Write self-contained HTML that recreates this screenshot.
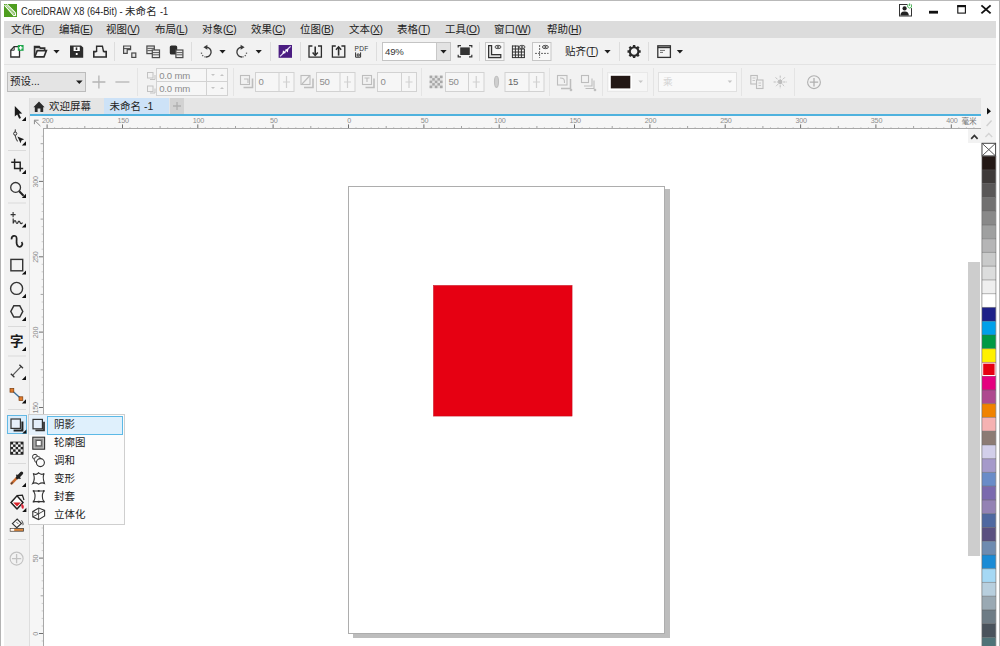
<!DOCTYPE html>
<html lang="zh-CN">
<head>
<meta charset="utf-8">
<title>CorelDRAW X8 (64-Bit) - 未命名 -1</title>
<style>
html,body{margin:0;padding:0;}
body{width:1000px;height:646px;overflow:hidden;position:relative;background:#fff;
 font-family:"Liberation Sans","Noto Sans CJK SC",sans-serif;font-size:12px;color:#1a1a1a;}
.abs{position:absolute;}
#win{position:absolute;left:0;top:0;width:1000px;height:646px;overflow:hidden;}
#topline{left:0;top:0;width:1000px;height:1px;background:#b9b9b9;}
#titlebar{left:0;top:1px;width:1000px;height:20px;background:#fff;}
#title{left:21px;top:3px;height:16px;width:160px;font-size:10.6px;line-height:16px;color:#262626;white-space:nowrap;}
#title span{position:absolute;top:0;transform-origin:0 50%;white-space:nowrap;}
#menubar{left:4px;top:21px;width:992px;height:17px;background:#dcdcdc;}
.mi{position:absolute;top:0px;height:17px;line-height:17px;font-size:10.5px;color:#222;white-space:nowrap;}
.mi span{font-size:10.2px;letter-spacing:-0.3px;}
.mi u{text-decoration:underline;}
#toolbar{left:4px;top:38px;width:992px;height:26px;background:#f2f2f2;}
#propbar{left:4px;top:64px;width:992px;height:34px;background:#f2f2f2;border-top:1px solid #e3e3e3;box-sizing:border-box;}
#leftedge{left:0;top:21px;width:4px;height:625px;background:#fff;}
#toolbox{left:4px;top:98px;width:26px;height:548px;background:#f2f2f2;border-right:1px solid #dedede;box-sizing:border-box;}
#tabrow{left:30px;top:98px;width:951px;height:16px;background:#e5e5e5;}
#blueline{left:30px;top:114px;width:951px;height:2px;background:#4fb2de;}
#hruler{left:30px;top:116px;width:951px;height:13px;background:#f6f6f6;overflow:hidden;}
#vruler{left:30px;top:129px;width:13px;height:517px;background:#f6f6f6;overflow:hidden;}
#canvas{left:43px;top:128px;width:940px;height:520px;background:#fff;border:1px solid #a8a8a8;box-sizing:border-box;}
.sep{position:absolute;width:1px;background:#d4d4d4;}
.rl{position:absolute;top:0px;font-size:8px;line-height:9px;color:#777;letter-spacing:-0.3px;}
.rt{position:absolute;bottom:0;width:1px;height:4px;background:#999;}
.vl{position:absolute;left:0px;font-size:8px;line-height:9px;color:#777;letter-spacing:-0.3px;transform-origin:0 0;transform:rotate(-90deg);white-space:nowrap;}
.vt{position:absolute;right:0;height:1px;width:4px;background:#999;}
.fld{position:absolute;box-sizing:border-box;border:1px solid #d9d9d9;background:#f7f7f7;color:#8a8a8a;font-size:11px;}
</style>
</head>
<body>
<div id="win">
<div class="abs" id="titlebar"></div>
<div class="abs" id="topline"></div>
<div class="abs" id="leftedge"></div>
<div class="abs" id="title"><span style="left:0;transform:scaleX(0.866)">CorelDRAW X8 (64-Bit) -</span><span style="left:104px;font-size:10.5px;letter-spacing:0.1px">未命名</span><span style="left:139px;transform:scaleX(0.86)">-1</span></div>
<svg class="abs" style="left:880px;top:0" width="120" height="21" viewBox="880 0 120 21">
<rect x="899.5" y="4.5" width="12" height="11.5" fill="#fff" stroke="#333" stroke-width="1"/>
<circle cx="904.6" cy="8.4" r="2.1" fill="#222"/>
<path d="M900.4,15.4 C900.6,12 902.4,11.4 904.6,11.4 C906.8,11.4 908.6,12 908.8,15.4 Z" fill="#222"/>
<circle cx="909.6" cy="6" r="2.6" fill="#fff"/>
<path d="M908.2,4.6 A2,2 0 1 0 911,4.6 M909.6,3.4 V6" fill="none" stroke="#3bb54a" stroke-width="0.9"/>
<rect x="929" y="10.8" width="9" height="2.8" fill="#111"/>
<rect x="957.8" y="6" width="7.6" height="7.1" fill="none" stroke="#111" stroke-width="1.1"/>
<rect x="957.2" y="5" width="8.8" height="2.2" fill="#111"/>
<path d="M981.4,5.4 L990.6,13.4 M990.6,5.4 L981.4,13.4" stroke="#111" stroke-width="1.9"/>
</svg>
<svg class="abs" style="left:4px;top:4px" width="13" height="13" viewBox="0 0 13 13">
<rect width="13" height="13" fill="#4f9e1f"/>
<path d="M0.5,1.2 L9.8,11.6 L11.6,11.2 L11.2,8.6 L3,0.4" fill="none" stroke="#fff" stroke-width="1.1"/>
<path d="M1.6,0.6 L10.6,10.4" stroke="#dff0d0" stroke-width="1"/>
</svg>
<div class="abs" style="left:0;top:0;width:1px;height:646px;background:#b4b4b4"></div>
<div class="abs" style="left:999px;top:0;width:1px;height:646px;background:#b4b4b4"></div>
<div class="abs" style="left:996px;top:21px;width:3px;height:625px;background:#fff"></div>
<div class="abs" id="menubar">
 <div class="mi" style="left:7px">文件<span>(<u>F</u>)</span></div>
 <div class="mi" style="left:55px">编辑<span>(<u>E</u>)</span></div>
 <div class="mi" style="left:102px">视图<span>(<u>V</u>)</span></div>
 <div class="mi" style="left:151px">布局<span>(<u>L</u>)</span></div>
 <div class="mi" style="left:198px">对象<span>(<u>C</u>)</span></div>
 <div class="mi" style="left:247px">效果<span>(<u>C</u>)</span></div>
 <div class="mi" style="left:296px">位图<span>(<u>B</u>)</span></div>
 <div class="mi" style="left:345px">文本<span>(<u>X</u>)</span></div>
 <div class="mi" style="left:393px">表格<span>(<u>T</u>)</span></div>
 <div class="mi" style="left:441px">工具<span>(<u>O</u>)</span></div>
 <div class="mi" style="left:490px">窗口<span>(<u>W</u>)</span></div>
 <div class="mi" style="left:543px">帮助<span>(<u>H</u>)</span></div>
</div>
<div class="abs" id="toolbar"></div>
<div class="abs" id="propbar"></div>
<svg class="abs" style="left:0;top:39px" width="1000" height="26" viewBox="0 39 1000 26">
<g fill="none" stroke="#2d2d2d" stroke-width="1.5" stroke-linejoin="miter">
 <!-- new -->
 <path d="M10.8,50.2 L14.2,46.6 H19.5 V57 H10.8 Z" fill="#fff" stroke-width="1.3"/>
 <path d="M10.8,50.2 H14.2 V46.6" stroke-width="1"/>
 <rect x="17.8" y="45" width="5.8" height="5.8" fill="#1ea64b" stroke="none"/>
 <path d="M20.7,46.1 V49.7 M18.9,47.9 H22.5" stroke="#fff" stroke-width="1.3"/>
 <!-- open -->
 <path d="M34.6,56.8 V46.6 H39.2 L40.4,48.2 H44.6 V50.4" stroke-width="1.7"/>
 <path d="M34.6,46.6 H39.2 L40.4,48.2 H34.6Z" fill="#2d2d2d" stroke="none"/>
 <path d="M34.8,56.9 L37.2,50.6 H46.4 L44,56.9 Z" stroke-width="1.6" fill="#f6f6f6"/>
 <!-- save -->
 <path d="M70,45.4 H81 L83.2,47.6 V57.8 H70 Z" fill="#2d2d2d" stroke="none"/>
 <rect x="73.6" y="46.8" width="6.2" height="4.2" fill="#fff" stroke="none"/>
 <rect x="75.7" y="47.4" width="1.6" height="2.6" fill="#2d2d2d" stroke="none"/>
 <rect x="75.8" y="53" width="1.8" height="2" fill="#fff" stroke="none"/>
 <!-- print -->
 <path d="M96.6,52 V46.2 H102.4 L103.6,52" stroke-width="1.4"/>
 <path d="M96.4,51.6 H93.8 V57 H106.2 V51.6 H103.6" stroke-width="1.6"/>
 <path d="M96.8,54.2 H103.2" stroke-width="0" />
</g>
<g fill="none" stroke="#4a4a4a" stroke-width="1.2">
 <!-- cut-ish -->
 <path d="M123.6,53.4 V46 H130.6 V49.6 H127.2 V53.4 Z" fill="#e6e6e6"/>
 <path d="M124,48.6 H130.4" stroke-width="1"/>
 <rect x="131.8" y="53" width="4" height="4.4" fill="#e6e6e6"/>
 <!-- copy -->
 <rect x="146.9" y="46" width="7.4" height="7.6" fill="#e6e6e6"/>
 <path d="M147.4,48.4 H154 M147.4,50.6 H152" stroke-width="0.9"/>
 <rect x="152.3" y="50" width="7.2" height="7.6" fill="#ececec"/>
 <path d="M152.8,52.6 H159 M152.8,54.8 H159" stroke-width="0.9"/>
 <!-- paste -->
 <rect x="170.4" y="46" width="6.2" height="8" rx="1" fill="#2d2d2d" stroke="#2d2d2d"/>
 <rect x="175.9" y="50" width="7" height="7.6" fill="#ececec"/>
 <path d="M176.4,52.6 H182.6 M176.4,54.8 H182.6" stroke-width="0.9"/>
</g>
<g fill="none" stroke="#3a3a3a" stroke-width="1.3">
 <!-- undo -->
 <path d="M206.4,47.2 A4.9,4.9 0 1 1 206.0,57" />
 <path d="M205.6,57 A4.9,4.9 0 0 1 201.4,52.6" stroke-dasharray="1.2 1.4" stroke="#555"/>
 <path d="M203.4,47.3 L207.4,44.8 V49.8 Z" fill="#3a3a3a" stroke="none"/>
 <!-- redo -->
 <path d="M241.6,47.2 A4.9,4.9 0 1 0 242.0,57" />
 <path d="M242.4,57 A4.9,4.9 0 0 0 246.6,52.6" stroke-dasharray="1.2 1.4" stroke="#555"/>
 <path d="M244.6,47.3 L240.6,44.8 V49.8 Z" fill="#3a3a3a" stroke="none"/>
</g>
<g fill="#1e1e1e">
 <path d="M53.4,50 H59.6 L56.5,53.4 Z"/>
 <path d="M219.4,50 H225.6 L222.5,53.4 Z"/>
 <path d="M255.6,50 H261.8 L258.7,53.4 Z"/>
 <path d="M440.4,50 H446.6 L443.5,53.4 Z"/>
 <path d="M604.4,50 H610.6 L607.5,53.4 Z"/>
 <path d="M676.8,50 H683 L679.9,53.4 Z"/>
</g>
<!-- purple -->
<rect x="278.6" y="45" width="13.4" height="12.8" fill="#4b1d82"/>
<path d="M280,56.4 L290.6,46.4" stroke="#e9defa" stroke-width="1.3"/>
<path d="M283,50.2 L286,53 L282.4,53.8Z M287.8,52.6 L284.8,49.8 L288.4,49Z" fill="#fff"/>
<g fill="none" stroke="#2d2d2d" stroke-width="1.3">
 <!-- import -->
 <path d="M312.4,46 H309 V57.2 H321.4 V46 H318"/>
 <path d="M315.2,46.6 V54.6" stroke-width="1.6"/>
 <path d="M312.6,52.4 L315.2,55.4 L317.8,52.4" stroke-width="1.5"/>
 <!-- export -->
 <path d="M335.8,46 H332.4 V57.2 H344.8 V46 H341.4"/>
 <path d="M338.6,47.6 V55.6" stroke-width="1.6"/>
 <path d="M336,49.8 L338.6,46.8 L341.2,49.8" stroke-width="1.5"/>
 <!-- pdf small icon -->
 <path d="M355.6,52.4 V57.2 H360.6 V52.4" stroke-width="1"/>
 <path d="M357.2,54 H359.2 V56 H357.2Z" stroke-width="0.9"/>
</g>
<text x="354.6" y="50.8" font-family="Liberation Sans, sans-serif" font-size="6.6" fill="#333" letter-spacing="0.2">PDF</text>
<!-- zoom box -->
<rect x="382.5" y="42.5" width="68" height="18" fill="#fff" stroke="#c4c4c4"/>
<rect x="437" y="43" width="13" height="17" fill="#e3e3e3"/>
<path d="M436.5,43 V60" stroke="#c8c8c8"/>
<path d="M440.4,50 H446.6 L443.5,53.4 Z" fill="#1e1e1e"/>
<text x="385" y="55" font-family="Liberation Sans, sans-serif" font-size="9.6" fill="#333" letter-spacing="-0.2">49%</text>
<!-- fit -->
<rect x="460.2" y="47.4" width="9.6" height="7.6" fill="#333"/>
<path d="M458.2,47.6 V45.6 H461 M469,45.6 H471.8 V47.6 M471.8,54.8 V56.8 H469 M461,56.8 H458.2 V54.8" fill="none" stroke="#333" stroke-width="1.2"/>
<!-- boxed ruler icon -->
<rect x="485.5" y="42.5" width="18.5" height="18" fill="#f8f8f8" stroke="#c6c6c6"/>
<path d="M488.6,45.6 H491.6 V54.6 H500.8 V57.6 H488.6 Z" fill="#ddd" stroke="#333" stroke-width="1.2"/>
<ellipse cx="498" cy="47" rx="3" ry="1.7" fill="#ddd" stroke="#444" stroke-width="0.9"/>
<ellipse cx="498" cy="47" rx="0.9" ry="1.1" fill="#444"/>
<!-- grid icon -->
<g stroke="#333" stroke-width="1">
<path d="M512,46 H518 M512,49 H524.6 M512,52 H524.6 M512,55 H524.6 M512,57.6 H524.6"/>
<path d="M512.4,45.6 V58 M515.4,45.6 V58 M518.4,45.6 V58 M521.4,49 V58 M524.4,49 V58"/>
</g>
<ellipse cx="522" cy="47" rx="3" ry="1.7" fill="#ddd" stroke="#444" stroke-width="0.9"/>
<ellipse cx="522" cy="47" rx="0.9" ry="1.1" fill="#444"/>
<!-- boxed guide icon -->
<rect x="532.5" y="42.5" width="18.5" height="18" fill="#f8f8f8" stroke="#c6c6c6"/>
<path d="M539.6,45 V58" stroke="#666" stroke-width="1" stroke-dasharray="2 1"/>
<path d="M535,53.4 H548.6" stroke="#666" stroke-width="1" stroke-dasharray="2 1"/>
<ellipse cx="545.4" cy="47" rx="3" ry="1.7" fill="#ddd" stroke="#444" stroke-width="0.9"/>
<ellipse cx="545.4" cy="47" rx="0.9" ry="1.1" fill="#444"/>
<!-- gear -->
<g transform="translate(634.1,51.5)">
<circle r="4.3" fill="none" stroke="#2a2a2a" stroke-width="2.1"/>
<g stroke="#2a2a2a" stroke-width="2.4">
<path d="M0,-6.6 V-4.6 M0,6.6 V4.6 M-6.6,0 H-4.6 M6.6,0 H4.6"/>
<path d="M-4.7,-4.7 L-3.3,-3.3 M4.7,4.7 L3.3,3.3 M-4.7,4.7 L-3.3,3.3 M4.7,-4.7 L3.3,-3.3"/>
</g>
</g>
<!-- window icon -->
<rect x="657.8" y="45.8" width="12.6" height="11.6" fill="#f4f4f4" stroke="#333" stroke-width="1.3"/>
<path d="M657.8,47.4 H670.4" stroke="#333" stroke-width="1.6"/>
<path d="M660,50.4 H665 M660,52.4 H663" stroke="#707070" stroke-width="1"/>
<!-- separators -->
<g stroke="#dddddd" stroke-width="1">
<path d="M114.5,42 V61 M191.5,42 V61 M270.5,42 V61 M300.5,42 V61 M376.5,42 V61 M479.5,42 V61 M619.5,42 V61 M648.5,42 V61"/>
</g>
</svg>
<div class="abs" style="left:565px;top:44px;font-size:10.5px;line-height:14px;color:#222;white-space:nowrap;">贴齐<span style="font-size:10.2px;letter-spacing:-0.3px">(<u>T</u>)</span></div>

<svg class="abs" style="left:0;top:65px" width="1000" height="33" viewBox="0 65 1000 33">
<!-- preset -->
<rect x="7.5" y="72.5" width="78" height="19" fill="#e4e4e4" stroke="#bcbcbc"/>
<path d="M76,80.4 H82.6 L79.3,84 Z" fill="#1e1e1e"/>
<path d="M92.4,82 H105.4 M98.9,75.6 V88.4" stroke="#b4b4b4" stroke-width="1.3"/>
<path d="M115.4,82 H129.4" stroke="#b4b4b4" stroke-width="1.3"/>
<g stroke="#e4e4e4"><path d="M137.5,68 V96 M233.5,68 V96 M421.5,68 V96 M549.5,68 V96 M602.5,68 V96 M653.5,68 V96 M741.5,68 V96 M794.5,68 V96"/></g>
<!-- xy fields -->
<rect x="156.5" y="68.5" width="71" height="27" fill="#f6f6f6" stroke="#d2d2d2"/>
<path d="M156.5,81.5 H227.5 M206.5,69 V95" stroke="#d2d2d2"/>
<text x="159.2" y="79.2" font-family="Liberation Sans, sans-serif" font-size="9.6" fill="#8c8c8c" letter-spacing="-0.2">0.0 mm</text>
<text x="159.2" y="92.2" font-family="Liberation Sans, sans-serif" font-size="9.6" fill="#8c8c8c" letter-spacing="-0.2">0.0 mm</text>
<g fill="#c4c4c4"><path d="M211,74 H215 L213,76Z M220,76 H224 L222,74Z M211,87 H215 L213,89Z M220,89 H224 L222,87Z"/></g>
<g fill="none" stroke="#c2c2c2" stroke-width="1"><rect x="147.5" y="72.5" width="5.5" height="5.5"/><path d="M150,79.5 H155 V75"/><rect x="147.5" y="86" width="5.5" height="5.5"/><path d="M150,93 H155 V88.5"/></g>
<rect x="255.5" y="72.5" width="38.5" height="19" fill="#f6f6f6" stroke="#d2d2d2"/><path d="M279.0,73 V91" stroke="#d2d2d2"/><path d="M283.0,82 H290.0 M286.5,76 V88" stroke="#d0d0d0" stroke-width="1.2"/><text x="258.5" y="85.1" font-family="Liberation Sans, sans-serif" font-size="9.6" fill="#8c8c8c" letter-spacing="-0.3">0</text><rect x="316.5" y="72.5" width="38.5" height="19" fill="#f6f6f6" stroke="#d2d2d2"/><path d="M340.0,73 V91" stroke="#d2d2d2"/><path d="M344.0,82 H351.0 M347.5,76 V88" stroke="#d0d0d0" stroke-width="1.2"/><text x="319.5" y="85.1" font-family="Liberation Sans, sans-serif" font-size="9.6" fill="#8c8c8c" letter-spacing="-0.3">50</text><rect x="377.5" y="72.5" width="39" height="19" fill="#f6f6f6" stroke="#d2d2d2"/><path d="M401.5,73 V91" stroke="#d2d2d2"/><path d="M405.5,82 H412.5 M409.0,76 V88" stroke="#d0d0d0" stroke-width="1.2"/><text x="380.5" y="85.1" font-family="Liberation Sans, sans-serif" font-size="9.6" fill="#8c8c8c" letter-spacing="-0.3">0</text><rect x="445.5" y="72.5" width="38.5" height="19" fill="#f6f6f6" stroke="#d2d2d2"/><path d="M468.5,73 V91" stroke="#d2d2d2"/><path d="M472.75,82 H479.75 M476.25,76 V88" stroke="#d0d0d0" stroke-width="1.2"/><text x="448.5" y="85.1" font-family="Liberation Sans, sans-serif" font-size="9.6" fill="#8c8c8c" letter-spacing="-0.3">50</text><rect x="505.0" y="72.5" width="39" height="19" fill="#f6f6f6" stroke="#d2d2d2"/><path d="M529.0,73 V91" stroke="#d2d2d2"/><path d="M533.0,82 H540.0 M536.5,76 V88" stroke="#d0d0d0" stroke-width="1.2"/><text x="508.0" y="85.1" font-family="Liberation Sans, sans-serif" font-size="9.6" fill="#8c8c8c" letter-spacing="-0.3" style="fill:#666">15</text>
<g fill="none" stroke="#bdbdbd" stroke-width="1.1">
<!-- icon1 -->
<rect x="240.5" y="75.5" width="9" height="9"/><path d="M243.5,87.5 H252.5 V78.5" stroke-width="1.6"/><path d="M244,79 H248 V83"/>
<!-- icon2 -->
<rect x="301" y="75.5" width="9" height="9"/><path d="M304,87.5 H313 V78.5" stroke-width="1.6"/><path d="M302,84 L309.5,76"/>
<!-- icon3 -->
<rect x="362.5" y="75.5" width="9" height="9"/><path d="M365.5,87.5 H374 V78.5" stroke-width="1.6"/><path d="M364.5,78 H369.5 M367,78 V82"/>
<!-- feather -->
<ellipse cx="496.5" cy="81.8" rx="2" ry="5.6" fill="#cfcfcf"/>
<!-- iconA -->
<rect x="557.5" y="75.5" width="9.5" height="9.5"/><path d="M561,88.5 H570.5 V79" stroke-width="1.5"/><path d="M560,78 C564,78 564.5,79 564.5,83"/><circle cx="571" cy="90" r="0.8"/>
<!-- iconB -->
<rect x="581.5" y="75.5" width="7" height="7"/><path d="M584,86 H592 V78.5 M585.5,88.5 H594 V80.5" /><circle cx="595" cy="90" r="0.8"/>
<!-- iconC -->
<rect x="750.8" y="75.5" width="6.5" height="8.5"/><rect x="756.5" y="80" width="6.5" height="8.5" fill="#f0f0f0"/>
<path d="M752.5,78 H755.5 M752.5,80.5 H755 M758.5,83 H761 M758.5,85.5 H761" stroke-width="0.8"/>
<!-- iconD -->
<path d="M780.2,75.6 V88.6 M773.6,82 H787 M775.6,77.4 L784.8,86.6 M784.8,77.4 L775.6,86.6" stroke-width="1" stroke-dasharray="2.2 1"/>
<circle cx="780.2" cy="82" r="1.6" fill="#bdbdbd"/>
</g>
<!-- checker -->
<g><rect x="429.6" y="75.6" width="13" height="12.6" fill="#e2e2e2"/>
<g fill="#a8a8a8">
<rect x="429.6" y="75.6" width="2.6" height="2.5"/><rect x="434.8" y="75.6" width="2.6" height="2.5"/><rect x="440" y="75.6" width="2.6" height="2.5"/>
<rect x="432.2" y="78.1" width="2.6" height="2.5"/><rect x="437.4" y="78.1" width="2.6" height="2.5"/>
<rect x="429.6" y="80.6" width="2.6" height="2.5"/><rect x="434.8" y="80.6" width="2.6" height="2.5"/><rect x="440" y="80.6" width="2.6" height="2.5"/>
<rect x="432.2" y="83.1" width="2.6" height="2.5"/><rect x="437.4" y="83.1" width="2.6" height="2.5"/>
<rect x="429.6" y="85.6" width="2.6" height="2.6"/><rect x="434.8" y="85.6" width="2.6" height="2.6"/><rect x="440" y="85.6" width="2.6" height="2.6"/>
</g></g>
<!-- color box -->
<rect x="607.5" y="72.5" width="40" height="19" fill="#f6f6f6" stroke="#dcdcdc" stroke-dasharray="1 1"/>
<rect x="609" y="74" width="23" height="16" fill="#fff"/>
<rect x="610.8" y="75.8" width="19.5" height="12.6" fill="#231815"/>
<path d="M638.4,80.4 H643 L640.7,83 Z" fill="#c6c6c6"/>
<!-- dropdown -->
<rect x="658.5" y="72.5" width="78" height="19" fill="#f9f9f9" stroke="#e0e0e0"/>
<path d="M727.6,80.4 H732.2 L729.9,83 Z" fill="#c6c6c6"/>
<!-- circle plus -->
<circle cx="814" cy="82.2" r="6.4" fill="none" stroke="#b0b0b0" stroke-width="1.1"/>
<path d="M809.8,82.2 H818.2 M814,78 V86.4" stroke="#b0b0b0" stroke-width="1.3"/>
</svg>
<div class="abs" style="left:10px;top:74px;font-size:10.5px;line-height:15px;color:#222;white-space:nowrap;">预设...</div>
<div class="abs" style="left:663px;top:75px;font-size:9.5px;line-height:14px;color:#d4d4d4;white-space:nowrap;">乘</div>
<div class="abs" id="tabrow"></div>
<div class="abs" style="left:104px;top:98px;width:65px;height:16px;background:#cde2f7"></div>
<div class="abs" style="left:170px;top:98px;width:14px;height:16px;background:#d2d2d2"></div>
<svg class="abs" style="left:30px;top:98px" width="160" height="16" viewBox="30 98 160 16">
<path d="M33.4,107.2 L39,101.6 L44.6,107.2 H43.2 V112 H40.4 V108.6 H37.6 V112 H34.8 V107.2 Z" fill="#2a2a2a"/>
<path d="M173,106 H181 M177,102 V110" stroke="#b0b0b0" stroke-width="1.3"/>
</svg>
<div class="abs" style="left:49px;top:99px;font-size:10.5px;line-height:14px;color:#222;white-space:nowrap;">欢迎屏幕</div>
<div class="abs" style="left:109.5px;top:99px;font-size:10.5px;line-height:14px;color:#222;white-space:nowrap;">未命名 -1</div>
<div class="abs" id="blueline"></div>
<div class="abs" id="hruler"></div>
<svg class="abs" style="left:30px;top:116px" width="951" height="13" viewBox="30 116 951 13">
<path d="M54.6,127 V128.5 M62.2,127 V128.5 M69.7,127 V128.5 M77.2,127 V128.5 M92.3,127 V128.5 M99.8,127 V128.5 M107.4,127 V128.5 M114.9,127 V128.5 M130.0,127 V128.5 M137.5,127 V128.5 M145.1,127 V128.5 M152.6,127 V128.5 M167.7,127 V128.5 M175.2,127 V128.5 M182.7,127 V128.5 M190.3,127 V128.5 M205.3,127 V128.5 M212.9,127 V128.5 M220.4,127 V128.5 M227.9,127 V128.5 M243.0,127 V128.5 M250.5,127 V128.5 M258.1,127 V128.5 M265.6,127 V128.5 M280.7,127 V128.5 M288.2,127 V128.5 M295.8,127 V128.5 M303.3,127 V128.5 M318.4,127 V128.5 M325.9,127 V128.5 M333.4,127 V128.5 M341.0,127 V128.5 M356.0,127 V128.5 M363.6,127 V128.5 M371.1,127 V128.5 M378.6,127 V128.5 M393.7,127 V128.5 M401.2,127 V128.5 M408.8,127 V128.5 M416.3,127 V128.5 M431.4,127 V128.5 M438.9,127 V128.5 M446.5,127 V128.5 M454.0,127 V128.5 M469.1,127 V128.5 M476.6,127 V128.5 M484.1,127 V128.5 M491.7,127 V128.5 M506.7,127 V128.5 M514.3,127 V128.5 M521.8,127 V128.5 M529.3,127 V128.5 M544.4,127 V128.5 M551.9,127 V128.5 M559.5,127 V128.5 M567.0,127 V128.5 M582.1,127 V128.5 M589.6,127 V128.5 M597.2,127 V128.5 M604.7,127 V128.5 M619.8,127 V128.5 M627.3,127 V128.5 M634.8,127 V128.5 M642.4,127 V128.5 M657.4,127 V128.5 M665.0,127 V128.5 M672.5,127 V128.5 M680.0,127 V128.5 M695.1,127 V128.5 M702.6,127 V128.5 M710.2,127 V128.5 M717.7,127 V128.5 M732.8,127 V128.5 M740.3,127 V128.5 M747.9,127 V128.5 M755.4,127 V128.5 M770.5,127 V128.5 M778.0,127 V128.5 M785.5,127 V128.5 M793.1,127 V128.5 M808.1,127 V128.5 M815.7,127 V128.5 M823.2,127 V128.5 M830.7,127 V128.5 M845.8,127 V128.5 M853.3,127 V128.5 M860.9,127 V128.5 M868.4,127 V128.5 M883.5,127 V128.5 M891.0,127 V128.5 M898.6,127 V128.5 M906.1,127 V128.5 M921.2,127 V128.5 M928.7,127 V128.5 M936.2,127 V128.5 M943.8,127 V128.5 M958.8,127 V128.5 M966.4,127 V128.5 M973.9,127 V128.5" stroke="#cdcdcd" stroke-width="1"/>
<path d="M84.8,126 V128.5 M160.1,126 V128.5 M235.5,126 V128.5 M310.8,126 V128.5 M386.2,126 V128.5 M461.5,126 V128.5 M536.9,126 V128.5 M612.2,126 V128.5 M687.6,126 V128.5 M762.9,126 V128.5 M838.3,126 V128.5 M913.6,126 V128.5" stroke="#a4a4a4" stroke-width="1"/>
<path d="M47.1,124.4 V128.5 M122.5,124.4 V128.5 M197.8,124.4 V128.5 M273.1,124.4 V128.5 M348.5,124.4 V128.5 M423.9,124.4 V128.5 M499.2,124.4 V128.5 M574.5,124.4 V128.5 M649.9,124.4 V128.5 M725.2,124.4 V128.5 M800.6,124.4 V128.5 M875.9,124.4 V128.5 M951.3,124.4 V128.5" stroke="#707070" stroke-width="1"/>
<text x="47.7" y="123.4" text-anchor="middle" font-family="Liberation Sans, sans-serif" font-size="7.2" fill="#8c8c8c" letter-spacing="-0.2">200</text>
<text x="123.1" y="123.4" text-anchor="middle" font-family="Liberation Sans, sans-serif" font-size="7.2" fill="#8c8c8c" letter-spacing="-0.2">150</text>
<text x="198.4" y="123.4" text-anchor="middle" font-family="Liberation Sans, sans-serif" font-size="7.2" fill="#8c8c8c" letter-spacing="-0.2">100</text>
<text x="273.8" y="123.4" text-anchor="middle" font-family="Liberation Sans, sans-serif" font-size="7.2" fill="#8c8c8c" letter-spacing="-0.2">50</text>
<text x="349.1" y="123.4" text-anchor="middle" font-family="Liberation Sans, sans-serif" font-size="7.2" fill="#8c8c8c" letter-spacing="-0.2">0</text>
<text x="424.5" y="123.4" text-anchor="middle" font-family="Liberation Sans, sans-serif" font-size="7.2" fill="#8c8c8c" letter-spacing="-0.2">50</text>
<text x="499.8" y="123.4" text-anchor="middle" font-family="Liberation Sans, sans-serif" font-size="7.2" fill="#8c8c8c" letter-spacing="-0.2">100</text>
<text x="575.1" y="123.4" text-anchor="middle" font-family="Liberation Sans, sans-serif" font-size="7.2" fill="#8c8c8c" letter-spacing="-0.2">150</text>
<text x="650.5" y="123.4" text-anchor="middle" font-family="Liberation Sans, sans-serif" font-size="7.2" fill="#8c8c8c" letter-spacing="-0.2">200</text>
<text x="725.9" y="123.4" text-anchor="middle" font-family="Liberation Sans, sans-serif" font-size="7.2" fill="#8c8c8c" letter-spacing="-0.2">250</text>
<text x="801.2" y="123.4" text-anchor="middle" font-family="Liberation Sans, sans-serif" font-size="7.2" fill="#8c8c8c" letter-spacing="-0.2">300</text>
<text x="876.5" y="123.4" text-anchor="middle" font-family="Liberation Sans, sans-serif" font-size="7.2" fill="#8c8c8c" letter-spacing="-0.2">350</text>
<text x="951.9" y="123.4" text-anchor="middle" font-family="Liberation Sans, sans-serif" font-size="7.2" fill="#8c8c8c" letter-spacing="-0.2">400</text>
<text x="961.5" y="124" font-family="Liberation Sans, Noto Sans CJK SC, sans-serif" font-size="7.6" fill="#707070">毫米</text>
<path d="M34.6,120.4 L40.4,126 M34.4,120.2 H38.6 M34.4,120.2 V124.2" stroke="#8a8a8a" stroke-width="1" fill="none"/>
</svg>
<div class="abs" id="canvas"></div>
<div class="abs" id="vruler"></div>
<svg class="abs" style="left:30px;top:129px" width="14" height="517" viewBox="30 129 14 517">
<path d="M41.6,641.0 H43 M41.6,626.0 H43 M41.6,618.4 H43 M41.6,610.9 H43 M41.6,603.4 H43 M41.6,588.3 H43 M41.6,580.8 H43 M41.6,573.2 H43 M41.6,565.7 H43 M41.6,550.6 H43 M41.6,543.1 H43 M41.6,535.5 H43 M41.6,528.0 H43 M41.6,512.9 H43 M41.6,505.4 H43 M41.6,497.9 H43 M41.6,490.3 H43 M41.6,475.3 H43 M41.6,467.7 H43 M41.6,460.2 H43 M41.6,452.7 H43 M41.6,437.6 H43 M41.6,430.1 H43 M41.6,422.5 H43 M41.6,415.0 H43 M41.6,399.9 H43 M41.6,392.4 H43 M41.6,384.8 H43 M41.6,377.3 H43 M41.6,362.2 H43 M41.6,354.7 H43 M41.6,347.2 H43 M41.6,339.6 H43 M41.6,324.6 H43 M41.6,317.0 H43 M41.6,309.5 H43 M41.6,302.0 H43 M41.6,286.9 H43 M41.6,279.4 H43 M41.6,271.8 H43 M41.6,264.3 H43 M41.6,249.2 H43 M41.6,241.7 H43 M41.6,234.1 H43 M41.6,226.6 H43 M41.6,211.5 H43 M41.6,204.0 H43 M41.6,196.5 H43 M41.6,188.9 H43 M41.6,173.9 H43 M41.6,166.3 H43 M41.6,158.8 H43 M41.6,151.3 H43 M41.6,136.2 H43" stroke="#cdcdcd" stroke-width="1"/>
<path d="M40.6,595.8 H43 M40.6,520.5 H43 M40.6,445.1 H43 M40.6,369.8 H43 M40.6,294.4 H43 M40.6,219.1 H43 M40.6,143.7 H43" stroke="#a4a4a4" stroke-width="1"/>
<path d="M39,633.5 H43 M39,558.1 H43 M39,482.8 H43 M39,407.5 H43 M39,332.1 H43 M39,256.8 H43 M39,181.4 H43" stroke="#707070" stroke-width="1"/>
<text transform="translate(38.4,633.9) rotate(-90)" text-anchor="middle" font-family="Liberation Sans, sans-serif" font-size="7.2" fill="#8c8c8c" letter-spacing="-0.2">0</text>
<text transform="translate(38.4,558.5) rotate(-90)" text-anchor="middle" font-family="Liberation Sans, sans-serif" font-size="7.2" fill="#8c8c8c" letter-spacing="-0.2">50</text>
<text transform="translate(38.4,483.2) rotate(-90)" text-anchor="middle" font-family="Liberation Sans, sans-serif" font-size="7.2" fill="#8c8c8c" letter-spacing="-0.2">100</text>
<text transform="translate(38.4,407.9) rotate(-90)" text-anchor="middle" font-family="Liberation Sans, sans-serif" font-size="7.2" fill="#8c8c8c" letter-spacing="-0.2">150</text>
<text transform="translate(38.4,332.5) rotate(-90)" text-anchor="middle" font-family="Liberation Sans, sans-serif" font-size="7.2" fill="#8c8c8c" letter-spacing="-0.2">200</text>
<text transform="translate(38.4,257.1) rotate(-90)" text-anchor="middle" font-family="Liberation Sans, sans-serif" font-size="7.2" fill="#8c8c8c" letter-spacing="-0.2">250</text>
<text transform="translate(38.4,181.8) rotate(-90)" text-anchor="middle" font-family="Liberation Sans, sans-serif" font-size="7.2" fill="#8c8c8c" letter-spacing="-0.2">300</text>
</svg>
<div class="abs" id="toolbox"></div>
<div class="abs" style="left:981px;top:98px;width:15px;height:548px;background:#f2f2f2"></div>
<div class="abs" style="left:968px;top:129px;width:13px;height:517px;background:#fff"></div>
<div class="abs" style="left:968px;top:129px;width:13px;height:14px;background:#f2f2f2"></div>
<div class="abs" style="left:968px;top:262px;width:12px;height:294px;background:#cdcdcd"></div>
<svg class="abs" style="left:960px;top:98px" width="40" height="548" viewBox="960 98 40 548">
<path d="M987,107.8 L991,111.2 L987,114.6 Z" fill="#111"/>
<path d="M986.6,126 L991.6,120.6" stroke="#d0d0d0" stroke-width="1.4"/>
<path d="M985.4,137 L988.8,133.4 L992.2,137" stroke="#d4d4d4" stroke-width="1.4" fill="none"/>
<path d="M971.2,138.8 L974.4,135.4 L977.6,138.8" stroke="#333" stroke-width="1.7" fill="none"/>
<rect x="982" y="143.3" width="13.6" height="12.6" fill="#fff" stroke="#444" stroke-width="1"/>
<path d="M982.4,143.6 L995.2,155.6 M995.2,143.6 L982.4,155.6" stroke="#444" stroke-width="0.9"/>
<rect x="982" y="156.20" width="13.8" height="13.75" fill="#231815"/>
<rect x="982" y="169.95" width="13.8" height="13.75" fill="#3e3a39"/>
<rect x="982" y="183.70" width="13.8" height="13.75" fill="#595757"/>
<rect x="982" y="197.45" width="13.8" height="13.75" fill="#727171"/>
<rect x="982" y="211.20" width="13.8" height="13.75" fill="#898989"/>
<rect x="982" y="224.95" width="13.8" height="13.75" fill="#9fa0a0"/>
<rect x="982" y="238.70" width="13.8" height="13.75" fill="#b5b5b6"/>
<rect x="982" y="252.45" width="13.8" height="13.75" fill="#c9caca"/>
<rect x="982" y="266.20" width="13.8" height="13.75" fill="#dcdddd"/>
<rect x="982" y="279.95" width="13.8" height="13.75" fill="#efefef"/>
<rect x="982" y="293.70" width="13.8" height="13.75" fill="#ffffff"/>
<rect x="982" y="307.45" width="13.8" height="13.75" fill="#1d2088"/>
<rect x="982" y="321.20" width="13.8" height="13.75" fill="#00a0e9"/>
<rect x="982" y="334.95" width="13.8" height="13.75" fill="#009944"/>
<rect x="982" y="348.70" width="13.8" height="13.75" fill="#fff100"/>
<rect x="982" y="362.45" width="13.8" height="13.75" fill="#e60012"/>
<rect x="982" y="376.20" width="13.8" height="13.75" fill="#e4007f"/>
<rect x="982" y="389.95" width="13.8" height="13.75" fill="#ae4a8f"/>
<rect x="982" y="403.70" width="13.8" height="13.75" fill="#f08300"/>
<rect x="982" y="417.45" width="13.8" height="13.75" fill="#f5b2b2"/>
<rect x="982" y="431.20" width="13.8" height="13.75" fill="#8c7b74"/>
<rect x="982" y="444.95" width="13.8" height="13.75" fill="#d2cfea"/>
<rect x="982" y="458.70" width="13.8" height="13.75" fill="#a59aca"/>
<rect x="982" y="472.45" width="13.8" height="13.75" fill="#6a8cc8"/>
<rect x="982" y="486.20" width="13.8" height="13.75" fill="#7a69ae"/>
<rect x="982" y="499.95" width="13.8" height="13.75" fill="#9382b4"/>
<rect x="982" y="513.70" width="13.8" height="13.75" fill="#4f68a0"/>
<rect x="982" y="527.45" width="13.8" height="13.75" fill="#5a5080"/>
<rect x="982" y="541.20" width="13.8" height="13.75" fill="#6e8bb0"/>
<rect x="982" y="554.95" width="13.8" height="13.75" fill="#1a8bd5"/>
<rect x="982" y="568.70" width="13.8" height="13.75" fill="#a5d8f4"/>
<rect x="982" y="582.45" width="13.8" height="13.75" fill="#b8cfde"/>
<rect x="982" y="596.20" width="13.8" height="13.75" fill="#9aa9b3"/>
<rect x="982" y="609.95" width="13.8" height="13.75" fill="#6e7c85"/>
<rect x="982" y="623.70" width="13.8" height="13.75" fill="#4a535c"/>
<rect x="982" y="637.45" width="13.8" height="13.75" fill="#4f7378"/>
<rect x="982" y="651.20" width="13.8" height="13.75" fill="#888888"/>
<path d="M981.9,156 V646 M995.9,156 V646" stroke="#6c6c6c" stroke-width="0.8" opacity="0.75"/>
<path d="M982,156.20 H996 M982,169.95 H996 M982,183.70 H996 M982,197.45 H996 M982,211.20 H996 M982,224.95 H996 M982,238.70 H996 M982,252.45 H996 M982,266.20 H996 M982,279.95 H996 M982,293.70 H996 M982,307.45 H996 M982,321.20 H996 M982,334.95 H996 M982,348.70 H996 M982,362.45 H996 M982,376.20 H996 M982,389.95 H996 M982,403.70 H996 M982,417.45 H996 M982,431.20 H996 M982,444.95 H996 M982,458.70 H996 M982,472.45 H996 M982,486.20 H996 M982,499.95 H996 M982,513.70 H996 M982,527.45 H996 M982,541.20 H996 M982,554.95 H996 M982,568.70 H996 M982,582.45 H996 M982,596.20 H996 M982,609.95 H996 M982,623.70 H996 M982,637.45 H996 M982,651.20 H996" stroke="#555" stroke-width="0.7" opacity="0.6"/>
<rect x="982.7" y="363.15" width="12.4" height="12.35" fill="none" stroke="#fff" stroke-width="1"/>
</svg>
<svg class="abs" style="left:0;top:98px" width="30" height="548" viewBox="0 98 30 548">
<path d="M8,150.5 H26 M8,203 H26 M8,326.5 H26 M8,356 H26 M8,409.5 H26 M8,463.5 H26 M8,539.5 H26" stroke="#dadada" stroke-width="1"/>
<path d="M14.8,106 L14.8,116.6 L17.2,114.4 L19.2,118.8 L21,118 L19,113.8 L22.2,113.6 Z" fill="#1c1c1c"/>
<path d="M26,116.8 V121 H21.8 Z" fill="#111"/>
<path d="M15.4,129.4 C14.6,134 15,138 17.6,141.4" fill="none" stroke="#444" stroke-width="1.1"/>
<circle cx="15.2" cy="133.6" r="1.6" fill="#f0f0f0" stroke="#333" stroke-width="1"/>
<path d="M17.4,136.6 L24.2,139.2 L21.4,140.4 L20.6,143.2 Z" fill="#1c1c1c"/>
<path d="M26,141.20000000000002 V145.4 H21.8 Z" fill="#111"/>
<path d="M14.6,158.8 V168.4 H23.2 M11.2,162.2 H20.2 V171.6" fill="none" stroke="#222" stroke-width="1.45"/>
<path d="M26,169.8 V174 H21.8 Z" fill="#111"/>
<circle cx="15.6" cy="187.4" r="4.9" fill="none" stroke="#333" stroke-width="1.3"/>
<path d="M19.2,191.2 L23.6,195.8" stroke="#222" stroke-width="2"/>
<path d="M26,193.8 V198 H21.8 Z" fill="#111"/>
<path d="M10.6,214.6 H15.6 M13.1,212 V217.2" stroke="#333" stroke-width="1.1"/>
<path d="M13.2,218.6 V223.4 M13.4,223.2 C14.4,219.6 15.6,220.4 16,222.2 C16.6,224.2 17.6,223.6 18.2,222 C18.8,220.6 19.8,221.4 20.2,222.8 C20.8,224.4 21.8,223.6 22.6,222.6" fill="none" stroke="#333" stroke-width="1.2"/>
<path d="M26,223.20000000000002 V227.4 H21.8 Z" fill="#111"/>
<path d="M11.6,239.4 C11.2,235.4 16.2,234.4 16.6,238 C17,241.4 15.2,244.6 18.4,246.4 C21.4,247.8 23.4,244.2 21.6,242" fill="none" stroke="#222" stroke-width="1.7"/>
<rect x="10.9" y="259.4" width="11.8" height="11.4" fill="none" stroke="#333" stroke-width="1.4"/>
<path d="M26,270.40000000000003 V274.6 H21.8 Z" fill="#111"/>
<circle cx="16.6" cy="288.4" r="6" fill="none" stroke="#333" stroke-width="1.4"/>
<path d="M26,293.8 V298 H21.8 Z" fill="#111"/>
<path d="M10.8,311.4 L13.8,305.8 H19.8 L22.8,311.4 L19.8,317 H13.8 Z" fill="none" stroke="#333" stroke-width="1.4"/>
<path d="M26,316.8 V321 H21.8 Z" fill="#111"/>
<path d="M26,346.8 V351 H21.8 Z" fill="#111"/>
<path d="M12.6,375.4 L21.2,366.4" stroke="#555" stroke-width="1.2"/>
<path d="M10.8,373.8 L14.4,377.2 M19.4,364.8 L23,368.2" stroke="#333" stroke-width="1.3"/>
<path d="M26,375.8 V380 H21.8 Z" fill="#111"/>
<path d="M12,390.4 L20.8,398.6" stroke="#3a6f9a" stroke-width="1.3"/>
<rect x="10" y="388.4" width="3.8" height="3.8" fill="#e07a2a" stroke="#7a3d10" stroke-width="0.7"/>
<rect x="19" y="396.8" width="3.8" height="3.8" fill="#e07a2a" stroke="#7a3d10" stroke-width="0.7"/>
<path d="M26,399.2 V403.4 H21.8 Z" fill="#111"/>
<rect x="7.5" y="415.5" width="19" height="18" fill="#d9ecfa" stroke="#62b8e4" stroke-width="1"/>
<path d="M13.6,430.4 H22.4 V421.6" fill="none" stroke="#222" stroke-width="2"/>
<rect x="11" y="419" width="9.4" height="9.4" fill="#e6f0fb" stroke="#333" stroke-width="1.2"/>
<path d="M26.4,429.40000000000003 V433.6 H22.2 Z" fill="#111"/>
<rect x="10.6" y="442" width="12.5" height="12.3" fill="#f4f4f4" stroke="#333" stroke-width="0.8"/>
<g fill="#222"><rect x="10.6" y="442.00" width="2.5" height="2.45"/><rect x="15.6" y="442.00" width="2.5" height="2.45"/><rect x="20.6" y="442.00" width="2.5" height="2.45"/><rect x="13.1" y="444.45" width="2.5" height="2.45"/><rect x="18.1" y="444.45" width="2.5" height="2.45"/><rect x="10.6" y="446.90" width="2.5" height="2.45"/><rect x="15.6" y="446.90" width="2.5" height="2.45"/><rect x="20.6" y="446.90" width="2.5" height="2.45"/><rect x="13.1" y="449.35" width="2.5" height="2.45"/><rect x="18.1" y="449.35" width="2.5" height="2.45"/><rect x="10.6" y="451.80" width="2.5" height="2.45"/><rect x="15.6" y="451.80" width="2.5" height="2.45"/><rect x="20.6" y="451.80" width="2.5" height="2.45"/></g>
<path d="M11.6,483.4 L18.2,476.6" stroke="#c96a2e" stroke-width="2.6" stroke-linecap="round"/>
<path d="M11,484.2 L12.6,482.4" stroke="#444" stroke-width="1.2"/>
<path d="M17.4,477.6 L21.6,473.2" stroke="#222" stroke-width="3.2" stroke-linecap="round"/>
<path d="M16.4,474.8 L20.4,478.8" stroke="#222" stroke-width="1.6"/>
<path d="M26,482.8 V487 H21.8 Z" fill="#111"/>
<path d="M11,502.4 L17,495.8 L23,502.4 L17,509 Z" fill="#fff" stroke="#222" stroke-width="1.5"/>
<path d="M13.2,502.4 H20.8 L17,506.6 Z" fill="#d8232a"/>
<path d="M17,495.6 L22.4,495.2 L24,500" fill="none" stroke="#222" stroke-width="1.2"/>
<path d="M21.4,503.6 C23.4,504.8 24.4,506.4 23.6,508.2 C22.6,509.8 20.8,508.6 21.4,503.6Z" fill="#e0273a"/>
<path d="M26.4,507.8 V512 H22.2 Z" fill="#111"/>
<path d="M12.4,523.6 L17.2,519 L21.4,523.4 L16.8,527.6 Z" fill="#fafafa" stroke="#333" stroke-width="1.2"/>
<path d="M16.4,522 L18.4,524" stroke="#707070" stroke-width="1"/>
<path d="M21.6,520.4 C23,522.4 23.4,524 22.8,525.2" stroke="#444" fill="none" stroke-width="1"/>
<rect x="10.2" y="528.4" width="13.4" height="2.8" fill="#e1893a" stroke="#444" stroke-width="0.8"/>
<rect x="10.6" y="528.8" width="3.6" height="2" fill="#fff"/>
<circle cx="16.6" cy="558.6" r="6.5" fill="none" stroke="#c2c2c2" stroke-width="1.1"/>
<path d="M12,558.6 H21.2 M16.6,554 V563.2" stroke="#c2c2c2" stroke-width="1.3"/>
</svg>
<div class="abs" style="left:10px;top:333px;font-size:13.5px;line-height:17px;font-weight:bold;color:#1a1a1a;">字</div>
<div class="abs" style="left:28px;top:414px;width:97px;height:111px;box-sizing:border-box;border:1px solid #cfcfcf;background:#fcfcfc"></div>
<div class="abs" style="left:29px;top:415px;width:19px;height:20px;background:#e6f1fb"></div>
<div class="abs" style="left:47px;top:416px;width:76px;height:19px;box-sizing:border-box;border:1.5px solid #5cb9e6;background:#dff0fc"></div>
<div class="abs" style="left:54px;top:416.7px;font-size:10.5px;line-height:15px;color:#222;white-space:nowrap;">阴影</div>
<div class="abs" style="left:54px;top:435.1px;font-size:10.5px;line-height:15px;color:#222;white-space:nowrap;">轮廓图</div>
<div class="abs" style="left:54px;top:453.1px;font-size:10.5px;line-height:15px;color:#222;white-space:nowrap;">调和</div>
<div class="abs" style="left:54px;top:470.7px;font-size:10.5px;line-height:15px;color:#222;white-space:nowrap;">变形</div>
<div class="abs" style="left:54px;top:488.7px;font-size:10.5px;line-height:15px;color:#222;white-space:nowrap;">封套</div>
<div class="abs" style="left:54px;top:506.7px;font-size:10.5px;line-height:15px;color:#222;white-space:nowrap;">立体化</div>
<svg class="abs" style="left:28px;top:414px" width="22" height="111" viewBox="28 414 22 111">
<path d="M35.4,430.4 H44 V421.8" fill="none" stroke="#333" stroke-width="1.8"/>
<rect x="33" y="419.4" width="9.4" height="9.4" fill="#e4effb" stroke="#333" stroke-width="1.2"/>
<rect x="32.8" y="437.2" width="11.8" height="12" fill="#bdbdbd" stroke="#333" stroke-width="1.1"/>
<rect x="34.6" y="439" width="8.2" height="8.4" fill="#8d8d8d"/>
<rect x="36.2" y="440.6" width="5" height="5.2" fill="#fff" stroke="#444" stroke-width="0.8"/>
<circle cx="35" cy="456.8" r="2.5" fill="none" stroke="#333" stroke-width="1"/>
<circle cx="37.6" cy="459.6" r="3.2" fill="#fcfcfc" stroke="#444" stroke-width="1"/>
<circle cx="40.4" cy="462.6" r="4" fill="#fcfcfc" stroke="#333" stroke-width="1.1"/>
<path d="M33.2,473.4 C35.6,475.6 36.8,474.2 38.6,472.8 C40.4,474.2 41.8,475.6 44.2,473.4 C42.4,476.4 43.4,480.4 44.4,483.4 C41.8,482 40.4,483 38.6,484.2 C36.8,483 35.4,482 32.8,483.4 C34.6,480.4 34.6,476.6 33.2,473.4 Z" fill="none" stroke="#333" stroke-width="1.1"/>
<path d="M33.6,491 H43.8 C41.8,494.6 41.8,498.2 43.8,501.6 H33.6 C35.6,498.2 35.6,494.6 33.6,491 Z" fill="none" stroke="#333" stroke-width="1.1"/>
<g fill="#333"><rect x="37.8" y="490" width="1.8" height="1.8"/><rect x="37.8" y="500.8" width="1.8" height="1.8"/><rect x="32.8" y="490.2" width="1.6" height="1.6"/><rect x="43" y="490.2" width="1.6" height="1.6"/><rect x="32.8" y="500.8" width="1.6" height="1.6"/><rect x="43" y="500.8" width="1.6" height="1.6"/></g>
<path d="M32.8,511.4 L38.8,508 L44.6,510.4 V516 L38.6,519.6 L32.8,516.8 Z" fill="none" stroke="#333" stroke-width="1.1"/>
<path d="M32.8,511.4 L38.6,513.8 L44.6,510.4 M38.6,513.8 V519.6 M38.8,508 L38.6,513.8 M32.8,516.8 L38.6,513.8" fill="none" stroke="#333" stroke-width="0.9"/>
</svg>
<!-- page -->
<div class="abs" style="left:353px;top:189px;width:317px;height:449px;background:#bdbdbd;"></div>
<div class="abs" style="left:348px;top:186px;width:317px;height:448px;background:#fff;border:1px solid #adadad;box-sizing:border-box;"></div>
<svg class="abs" style="left:430px;top:282px" width="146" height="138" viewBox="430 282 146 138"><rect x="433.4" y="285.4" width="138.7" height="130.7" fill="#e60012" stroke="#b80618" stroke-width="0.4"/></svg>
</div>
</body>
</html>
